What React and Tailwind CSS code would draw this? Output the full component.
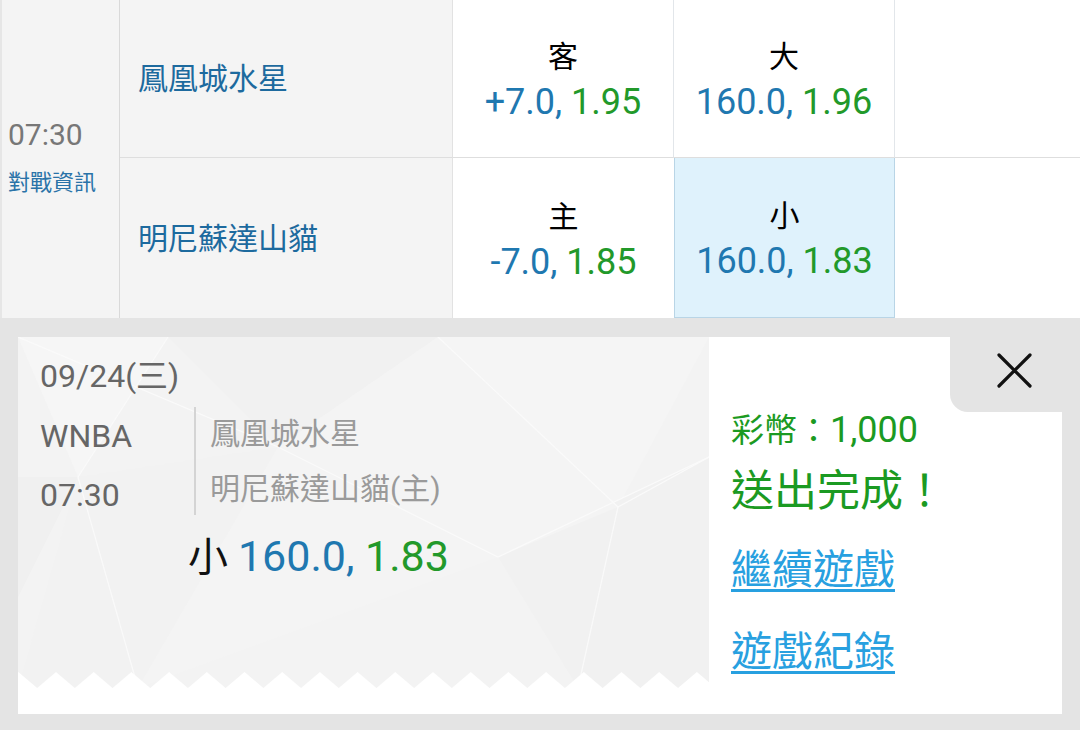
import React from "react";

const FONT = { fontFamily: 'Roboto, "Noto Sans CJK TC", sans-serif' };

function Odds({ a, b, className = "" }) {
  return (
    <div className={"text-[36px] leading-[44px] " + className}>
      <span className="text-[#1f78b0]">{a}</span>
      <span className="text-[#22992a]">{b}</span>
    </div>
  );
}

function BetCell({ label, a, b, className = "" }) {
  return (
    <div className={"flex flex-col items-center justify-center " + className}>
      <div className="text-[30px] leading-[40px] text-black mt-[4px]">{label}</div>
      <Odds a={a} b={b} className="mt-[3px]" />
    </div>
  );
}

function TicketBg() {
  return (
    <svg className="absolute inset-0 w-full h-full" viewBox="0 0 691 351" preserveAspectRatio="none">
      <rect width="691" height="351" fill="#f3f3f3" />
      <polygon points="0,0 150,0 60,140" fill="#f6f6f6" />
      <polygon points="150,0 420,0 260,110" fill="#f1f1f1" />
      <polygon points="420,0 691,0 600,170" fill="#f5f5f5" />
      <polygon points="0,140 60,140 0,260" fill="#f0f0f0" />
      <polygon points="260,110 480,220 120,351" fill="#f4f4f4" />
      <polygon points="480,220 691,120 691,351 560,351" fill="#f1f1f1" />
      <polygon points="60,140 260,110 120,351 0,351" fill="#f2f2f2" />
      <polygon points="420,0 600,170 480,220 260,110" fill="#f4f4f4" />
      <g stroke="#fafafa" strokeWidth="1.2" fill="none">
        <path d="M0 0 L260 110 L480 220 L691 120" />
        <path d="M150 0 L60 140 L120 351" />
        <path d="M600 170 L560 351" />
        <path d="M420 0 L600 170 L691 120" />
      </g>
    </svg>
  );
}

function ZigZag() {
  const period = 37.7;
  const start = 19.15 - period;
  const tris = [];
  for (let i = 0; i < 21; i++) {
    const x = start + i * period;
    tris.push(`${x},16 ${x + period / 2},0 ${x + period},16`);
  }
  return (
    <svg className="absolute left-0 bottom-0 w-full h-[16px]" viewBox="0 0 691 16" preserveAspectRatio="none">
      {tris.map((p, i) => (
        <polygon key={i} points={p} fill="#ffffff" />
      ))}
    </svg>
  );
}

export default function App() {
  return (
    <div className="w-[1080px] h-[730px] overflow-hidden bg-white" style={FONT}>
      {/* top table */}
      <div className="grid grid-cols-[120px_333px_221px_221px_1fr] grid-rows-[158px_160px]">
        <div className="row-span-2 bg-[#f4f4f4] border-l-2 border-l-[#e6e6e6] border-r border-r-[#d9d9d9] flex flex-col justify-center pl-[6px] pb-[6px]">
          <div className="text-[30px] leading-[40px] text-[#777777]">07:30</div>
          <div className="text-[22px] leading-[30px] text-[#2a73a8] mt-[13px]">對戰資訊</div>
        </div>
        <div className="bg-[#f4f4f4] border-r border-r-[#e2e2e2] border-b border-b-[#dedede] flex items-center pl-[18px]">
          <span className="text-[30px] text-[#1d6a9e]">鳳凰城水星</span>
        </div>
        <BetCell label="客" a="+7.0, " b="1.95" className="border-r border-r-[#e2e6ea] border-b border-b-[#dedede]" />
        <BetCell label="大" a="160.0, " b="1.96" className="border-r border-r-[#e2e6ea] border-b border-b-[#dedede]" />
        <div className="border-b border-b-[#dedede]" />

        <div className="bg-[#f4f4f4] border-r border-r-[#e2e2e2] flex items-center pl-[18px]">
          <span className="text-[30px] text-[#1d6a9e]">明尼蘇達山貓</span>
        </div>
        <BetCell label="主" a="-7.0, " b="1.85" />
        <BetCell label="小" a="160.0, " b="1.83" className="bg-[#dff2fc] border-x border-b border-[#b9d5e6]" />
        <div />
      </div>

      {/* lower panel */}
      <div className="h-[412px] bg-[#e4e4e4] pt-[19px] pl-[18px] pr-[18px] pb-[16px]">
        <div className="flex h-[377px]">
          {/* ticket */}
          <div className="w-[691px] flex flex-col">
            <div className="relative h-[351px]">
              <TicketBg />
              <ZigZag />
              <div className="relative pl-[22px] pt-[19px]">
                <div className="text-[32px] leading-[40px] text-[#666666]">09/24(三)</div>
                <div className="flex mt-[11px]">
                  <div className="w-[154px] flex flex-col pt-[9px] gap-[19px] text-[32px] leading-[40px] text-[#666666]">
                    <div>WNBA</div>
                    <div>07:30</div>
                  </div>
                  <div className="h-[108px] border-l-2 border-l-[#d4d4d4] pl-[14px] pt-[7px] flex flex-col gap-[15px] text-[30px] leading-[40px] text-[#9a9a9a]">
                    <div>鳳凰城水星</div>
                    <div>明尼蘇達山貓(主)</div>
                  </div>
                </div>
                <div className="mt-[16px] ml-[148px] text-[43px] leading-[50px]">
                  <span className="text-[#111111] text-[40px]">小 </span>
                  <span className="text-[#1f78b0]">160.0, </span>
                  <span className="text-[#22992a]">1.83</span>
                </div>
              </div>
            </div>
            <div className="h-[26px] bg-white" />
          </div>

          {/* right panel */}
          <div className="flex-1 bg-white flex flex-col">
            <div className="h-[75px] flex justify-end">
              <div className="w-[112px] h-full bg-[#e4e4e4] rounded-bl-[18px] flex justify-end items-start pr-[29px] pt-[15px]">
                <svg width="37" height="37" viewBox="0 0 37 37">
                  <path d="M3 3 L34 34 M34 3 L3 34" stroke="#111111" strokeWidth="3.2" strokeLinecap="round" />
                </svg>
              </div>
            </div>
            <div className="pl-[22px] flex flex-col items-start">
              <div className="-mt-[2px] text-[33px] leading-[40px] text-[#1b9a22]">
                彩幣：<span className="text-[36px]">1,000</span>
              </div>
              <div className="mt-[14px] text-[43px] leading-[52px] text-[#1b9a22]">送出完成！</div>
              <div className="mt-[28px] text-[41px] leading-[50px] text-[#28a0e0] underline decoration-[3px] underline-offset-[5px]">繼續遊戲</div>
              <div className="mt-[32px] text-[41px] leading-[50px] text-[#28a0e0] underline decoration-[3px] underline-offset-[5px]">遊戲紀錄</div>
            </div>
          </div>
        </div>
      </div>
    </div>
  );
}
